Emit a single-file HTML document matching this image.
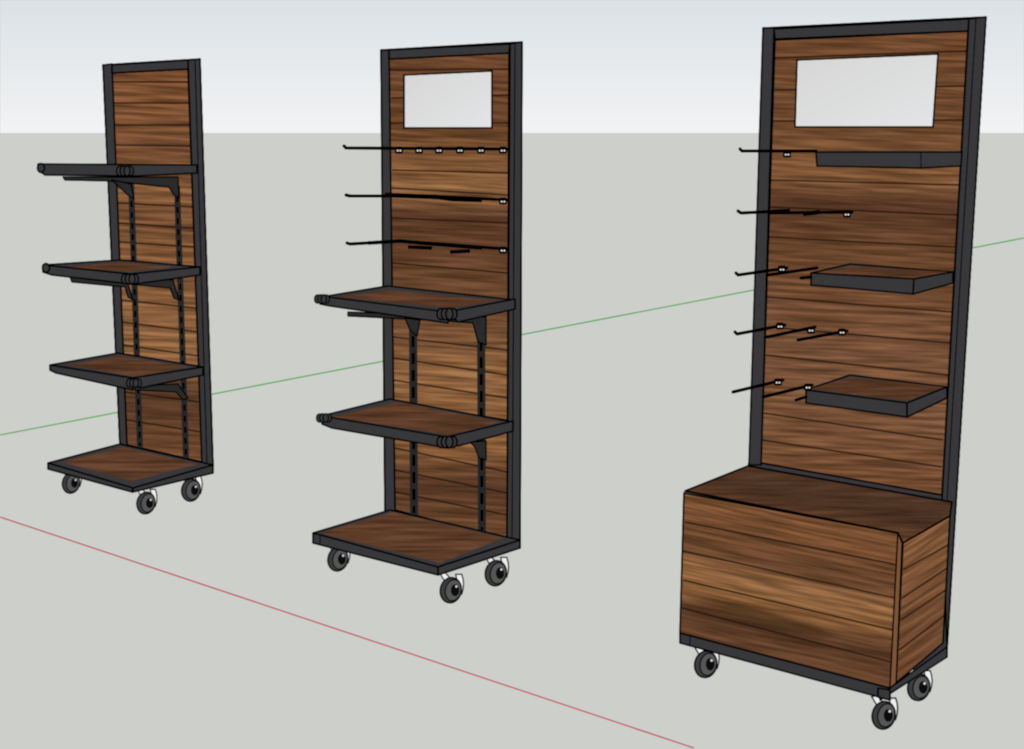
<!DOCTYPE html>
<html>
<head>
<meta charset="utf-8">
<title>Retail display units</title>
<style>
html,body{margin:0;padding:0;background:#cdcfca;width:1024px;height:749px;overflow:hidden}
svg{display:block;overflow:hidden}
.f{fill:#39393a;stroke:#060606;stroke-width:1.6;stroke-linejoin:round}
.d{fill:#2a2a2b;stroke:#060606;stroke-width:1.3;stroke-linejoin:round}
.o{fill:none;stroke:#060606;stroke-width:1.7;stroke-linejoin:round}
.p{fill:none;stroke:#24150c;stroke-width:1.5;opacity:.85}
.h{fill:none;stroke:#050505;stroke-width:3;stroke-linecap:round;stroke-linejoin:round}
.u{stroke:#262627;stroke-width:6;fill:none}
.s{stroke:#040404;stroke-width:2;fill:none;stroke-dasharray:6 5}
.t{stroke:#060606;stroke-width:1}
</style>
</head>
<body>
<svg width="1024" height="749" viewBox="0 0 1024 749" xmlns="http://www.w3.org/2000/svg">
<defs>
<linearGradient id="sky" x1="0" y1="0" x2="0" y2="1">
<stop offset="0" stop-color="#dbe1e5"/><stop offset="1" stop-color="#f2f3f4"/>
</linearGradient>
<linearGradient id="glass" x1="0" y1="0" x2="1" y2="1">
<stop offset="0" stop-color="#d6d6d6"/><stop offset="1" stop-color="#e3e4e5"/>
</linearGradient>
<linearGradient id="w1" gradientUnits="userSpaceOnUse" x1="0" y1="66" x2="0" y2="465">
<stop offset="0" stop-color="#915f3b"/><stop offset=".13" stop-color="#94633f"/><stop offset=".22" stop-color="#8a5c3d"/><stop offset=".3" stop-color="#a5734a"/>
<stop offset=".38" stop-color="#8a5d3c"/><stop offset=".5" stop-color="#a06f47"/><stop offset=".62" stop-color="#a8764d"/><stop offset=".72" stop-color="#a5764b"/><stop offset=".84" stop-color="#654430"/><stop offset="1" stop-color="#8a5c3a"/>
</linearGradient>
<linearGradient id="w2" gradientUnits="userSpaceOnUse" x1="0" y1="50" x2="0" y2="545">
<stop offset="0" stop-color="#82553a"/><stop offset=".16" stop-color="#7d5334"/><stop offset=".24" stop-color="#9b6c46"/><stop offset=".29" stop-color="#ab7c50"/><stop offset=".34" stop-color="#684430"/><stop offset=".45" stop-color="#7a5237"/><stop offset=".55" stop-color="#865c3e"/>
<stop offset=".65" stop-color="#aa794d"/><stop offset=".8" stop-color="#a47246"/><stop offset=".88" stop-color="#654330"/><stop offset="1" stop-color="#8c5f3b"/>
</linearGradient>
<linearGradient id="w3" gradientUnits="userSpaceOnUse" x1="0" y1="30" x2="0" y2="500">
<stop offset="0" stop-color="#835738"/><stop offset=".2" stop-color="#835839"/><stop offset=".32" stop-color="#9a6b45"/><stop offset=".37" stop-color="#664330"/><stop offset=".46" stop-color="#7a5236"/><stop offset=".56" stop-color="#865b3e"/>
<stop offset=".68" stop-color="#8b6044"/><stop offset=".82" stop-color="#906446"/><stop offset="1" stop-color="#835738"/>
</linearGradient>
<linearGradient id="w4" gradientUnits="userSpaceOnUse" x1="0" y1="505" x2="0" y2="675">
<stop offset="0" stop-color="#986842"/><stop offset=".2" stop-color="#8a5c3b"/><stop offset=".36" stop-color="#7a5237"/><stop offset=".5" stop-color="#ad7c50"/><stop offset=".62" stop-color="#a37247"/><stop offset=".75" stop-color="#644330"/><stop offset="1" stop-color="#8d5f3e"/>
</linearGradient>
<linearGradient id="w5" gradientUnits="userSpaceOnUse" x1="0" y1="535" x2="0" y2="660">
<stop offset="0" stop-color="#9a6b45"/><stop offset=".5" stop-color="#8c6040"/><stop offset="1" stop-color="#82573a"/>
</linearGradient>
<linearGradient id="w6" gradientUnits="userSpaceOnUse" x1="800" y1="478" x2="792" y2="518">
<stop offset="0" stop-color="#5a3e2e"/><stop offset=".5" stop-color="#533829"/><stop offset="1" stop-color="#6f4b33"/>
</linearGradient>
<filter id="wf" x="0" y="0" width="1" height="1" color-interpolation-filters="sRGB">
<feTurbulence type="fractalNoise" baseFrequency=".014 .28" numOctaves="3" seed="7" result="n"/>
<feColorMatrix in="n" type="matrix" values="0 0 0 0 .16  0 0 0 0 .09  0 0 0 0 .04  1 0 0 0 -.26" result="c"/>
<feComposite in="c" in2="SourceAlpha" operator="in" result="g"/>
<feMerge><feMergeNode in="SourceGraphic"/><feMergeNode in="g"/></feMerge>
</filter>
<filter id="soft" filterUnits="userSpaceOnUse" x="0" y="0" width="1024" height="749"><feGaussianBlur stdDeviation=".5"/></filter>
<filter id="bl" x="-30%" y="-60%" width="160%" height="220%"><feGaussianBlur stdDeviation="6"/></filter>
<clipPath id="c1"><polygon points="112,73 188,69 202,462 127,445"/></clipPath>
<clipPath id="c2"><polygon points="389,59 509,53 507,540 395,510"/></clipPath>
<clipPath id="c3"><polygon points="775,40 968,31 942,495 761,463"/></clipPath>
<clipPath id="c4"><polygon points="684,493 898,533 890,688 680,633"/></clipPath>
<clipPath id="c5"><polygon points="903,543 950,516 943,643 896,683"/></clipPath>
<g id="wheel">
<path d="M-10,-13 L-6,-14 L1,-6 L-4,-3 Z" fill="#efefef" stroke="#0a0a0a" stroke-width="1"/>
<path d="M3,-12 L8,-12 Q11,-4 8,4 L5,-3 Z" fill="#efefef" stroke="#0a0a0a" stroke-width="1"/>
<ellipse cx="-1" cy="1" rx="8.6" ry="10.4" transform="rotate(12 -1 1)" fill="#3e3e3f" stroke="#060606" stroke-width="1.2"/>
<ellipse cx="1" cy="1" rx="6.4" ry="8.8" transform="rotate(12 1 1)" fill="#565657" stroke="#0c0c0c" stroke-width="1"/>
<ellipse cx="2.5" cy="1" rx="3.4" ry="4.8" fill="#0a0a0a"/>
<circle cx="3.6" cy="-2" r="1" fill="#ddd"/>
</g>
<g id="knob">
<ellipse cx="-6" cy="0" rx="4" ry="5.6" class="f"/>
<ellipse cx="6" cy="0" rx="4" ry="5.6" class="f"/>
<ellipse cx="-2" cy="0" rx="3.6" ry="5.8" class="f"/>
<ellipse cx="2.4" cy="0" rx="3.6" ry="5.8" class="f"/>
</g>
<g id="peg">
<rect x="-4" y="-3.4" width="8" height="7" rx="2" fill="#060606"/>
<circle cx="-1.3" cy=".6" r=".95" fill="#f4f4f4"/><circle cx="1.4" cy=".6" r=".95" fill="#f4f4f4"/>
</g>
</defs>

<g filter="url(#soft)">
<!-- Sky and ground -->
<rect width="1024" height="134" fill="url(#sky)"/>
<rect y="133" width="1024" height="616" fill="#cdcfca"/>
<!-- Axes -->
<line x1="0" y1="435" x2="1024" y2="238" stroke="#42a048" stroke-width="1.1"/>
<line x1="0" y1="517" x2="694" y2="748" stroke="#b8383c" stroke-width="1.1"/>

<!-- ============ UNIT 1 ============ -->
<polygon class="f" points="103,65 200,59 213,466 202,466 127,446 120,446"/>
<g clip-path="url(#c1)">
<rect x="70" y="30" width="170" height="470" fill="url(#w1)" filter="url(#wf)" transform="rotate(2.5 155 260)"/>
<path class="p" d="M112,82 L188,82 M113,103 L189,103 M114,125 L190,125 M115,145 L191,146 M117,203 L193,207 M118,223 L193,228 M120,242 L195,247 M121,300 L197,308 M123,322 L198,332 M123,345 L199,356 M125,392 L200,402 M127,420 L201,432"/>
</g>
<polygon class="o" points="112,73 188,69 202,462 127,445"/>
<polygon class="f" points="103,65 112,64 127,446 120,446"/>
<polygon class="f" points="112,65 189,60 188,69 112,73"/>
<polygon class="f" points="188,60 200,59 213,466 202,466"/>
<line x1="195" y1="60" x2="207" y2="466" class="t"/>
<!-- uprights -->
<line class="u" x1="131" y1="180" x2="140" y2="448"/><line class="s" x1="131" y1="190" x2="140" y2="446"/>
<line class="u" x1="177" y1="186" x2="186" y2="458"/><line class="s" x1="177" y1="196" x2="186" y2="456"/>
<!-- shelf 1 -->
<polygon class="d" points="63,177 178,177 179,198 174,195 169,187 110,181 65,180"/>
<polygon class="d" points="112,180 131,184 134,199 129,196"/>
<polygon class="f" points="38,164 197,165 197,173 135,176 45,175 38,170"/>
<use href="#knob" transform="translate(125,171) scale(.85)"/>
<ellipse cx="41" cy="168" rx="3.5" ry="4.4" class="f"/>
<!-- shelf 2 -->
<polygon class="d" points="70,277 173,280 179,300 174,298 170,288 128,284 133,300 128,297 125,287 72,282"/>
<polygon class="f" points="43,265 120,260 200,267 130,274"/>
<polygon points="67,267 120,262 173,267 130,272" fill="#6a4632" filter="url(#wf)"/>
<polygon class="f" points="43,265 130,274 131,284 52,275 43,272"/>
<polygon class="f" points="130,274 200,267 200,275 135,284"/>
<use href="#knob" transform="translate(130,279) scale(.85)"/>
<ellipse cx="46" cy="268" rx="3.5" ry="4.4" class="f"/>
<!-- shelf 3 -->
<polygon class="d" points="135,386 178,384 188,398 183,400 176,392 135,390"/>
<polygon class="f" points="50,365 118,353 203,367 132,378"/>
<polygon points="68,365 120,356 188,367 137,377" fill="#6a4632" filter="url(#wf)"/>
<polygon class="f" points="50,365 132,378 133,390 56,373 50,370"/>
<polygon class="f" points="132,378 203,367 203,375 140,388"/>
<use href="#knob" transform="translate(134,383) scale(.75)"/>
<!-- base -->
<use href="#wheel" transform="translate(72,482) scale(1)"/>
<use href="#wheel" transform="translate(147,502) scale(1.05)"/>
<use href="#wheel" transform="translate(192,489) scale(1.08)"/>
<polygon class="f" points="48,463 120,444 213,465 133,488"/>
<polygon points="62,462 123,447 198,464 132,481" fill="#6f4a35" filter="url(#wf)"/>
<polygon class="f" points="48,463 133,488 132,492 48,469"/>
<polygon class="f" points="133,488 213,465 213,473 133,492"/>

<!-- ============ UNIT 2 ============ -->
<polygon class="f" points="381,50 522,42 520,548 507,550 395,511 385,511"/>
<g clip-path="url(#c2)">
<rect x="350" y="20" width="200" height="560" fill="url(#w2)" filter="url(#wf)" transform="rotate(3 450 300)"/>
<path class="p" d="M390,70 L509,69 M391,98 L509,95 M391,123 L509,123 M392,170 L508,173 M392,188 L508,195 M392,218 L508,223 M392,263 L508,273 M393,337 L507,350 M393,358 L507,375 M393,380 L507,398 M394,402 L507,420 M395,448 L507,472 M395,470 L507,493 M395,492 L507,515"/>
</g>
<polygon class="o" points="389,59 509,53 507,540 395,510"/>
<polygon fill="url(#glass)" stroke="#060606" stroke-width="1.6" points="404,75 492,71 492,128 404,128"/>
<polygon class="f" points="381,50 389,50 395,511 385,511"/>
<polygon class="f" points="389,50 510,44 509,53 389,59"/>
<polygon class="f" points="510,44 522,42 520,548 507,548"/>
<line x1="515" y1="43" x2="512" y2="545" class="t"/>
<!-- hooks -->
<path class="h" d="M344,146 L346,148 L507,149"/>
<use href="#peg" transform="translate(399,150)"/><use href="#peg" transform="translate(419,150)"/><use href="#peg" transform="translate(439,150)"/><use href="#peg" transform="translate(460,150)"/><use href="#peg" transform="translate(481,150)"/><use href="#peg" transform="translate(503,150)"/>
<path class="h" d="M346,195 L350,196 L430,196 L507,200"/>
<path d="M385,195 L436,197 L452,199 L482,200" stroke="#040404" stroke-width="4.4" fill="none"/>
<use href="#peg" transform="translate(503,201)"/>
<path class="h" d="M347,243 L350,244 L400,241 L507,249"/>
<path d="M368,243 L400,241 L420,243 L445,245 L482,248 M408,247 L432,248 M450,252 L470,251" stroke="#040404" stroke-width="3.6" fill="none"/>
<use href="#peg" transform="translate(503,250)"/>
<!-- uprights -->
<line x1="413" y1="316" x2="414" y2="515" stroke="#262627" stroke-width="8"/><line x1="413" y1="336" x2="414" y2="513" stroke="#040404" stroke-width="2.8" stroke-dasharray="11 6"/>
<line x1="481" y1="316" x2="482" y2="532" stroke="#262627" stroke-width="8"/><line x1="481" y1="340" x2="482" y2="530" stroke="#040404" stroke-width="2.8" stroke-dasharray="11 6"/>
<!-- shelf A -->
<polygon class="d" points="348,312 486,317 486,345 478,342 473,323 432,320 348,316"/>
<polygon class="d" points="405,318 420,320 417,336 410,330"/>
<polygon class="f" points="315,298 388,286 515,300 447,312"/>
<polygon points="338,297 390,290 498,301 449,308" fill="#6a4632" filter="url(#wf)"/>
<polygon class="f" points="320,296 447,312 448,323 330,306 320,304"/>
<polygon class="f" points="447,312 515,299 515,309 458,322"/>
<use href="#knob" transform="translate(447,314)"/>
<g transform="translate(322,299) scale(.75)"><use href="#knob"/></g>
<!-- shelf B -->
<polygon class="d" points="470,442 486,441 486,460 479,458 475,447"/>
<polygon class="f" points="317,417 390,399 513,422 447,437"/>
<polygon points="332,417 397,402 500,422 450,435" fill="#6a4632" filter="url(#wf)"/>
<polygon class="f" points="322,416 447,437 448,448 332,428 322,424"/>
<polygon class="f" points="447,437 513,421 513,431 458,446"/>
<use href="#knob" transform="translate(447,442)"/>
<g transform="translate(324,418) scale(.75)"><use href="#knob"/></g>
<!-- base -->
<use href="#wheel" transform="translate(339,558) scale(1.15)"/>
<use href="#wheel" transform="translate(452,589) scale(1.22)"/>
<use href="#wheel" transform="translate(497,572) scale(1.22)"/>
<polygon class="f" points="313,533 390,510 520,540 438,567"/>
<polygon points="320,533 393,512 503,538 440,563" fill="#6d4833" filter="url(#wf)"/>
<polygon class="f" points="313,533 438,567 438,575 313,543"/>
<polygon class="f" points="438,567 520,540 520,548 438,575"/>
<line x1="320" y1="535" x2="320" y2="545" class="t"/>

<!-- ============ UNIT 3 ============ -->
<polygon class="f" points="763,28 986,17 947,650 890,690 700,640 749,463 761,463"/>
<g clip-path="url(#c3)">
<rect x="720" y="0" width="290" height="530" fill="url(#w3)" filter="url(#wf)" transform="rotate(2.5 860 260)"/>
<path class="p" d="M775,58 L967,51 M775,90 L965,86 M773,121 L963,120 M771,180 L960,185 M770,207 L958,215 M769,237 L955,247 M767,297 L952,312 M768,327 L950,343 M765,355 L948,375 M763,413 L943,440 M762,440 L942,467"/>
</g>
<polygon class="o" points="775,40 968,31 942,495 761,463"/>
<polygon fill="url(#glass)" stroke="#060606" stroke-width="1.6" points="797,60 938,54 933,127 795,127"/>
<polygon class="f" points="763,28 774,28 761,465 749,465"/>
<polygon class="f" points="774,29 969,19 968,31 775,39"/>
<polygon class="f" points="969,19 986,17 947,648 942,500"/>
<line x1="976" y1="18" x2="947" y2="500" class="t"/>
<!-- shelves -->
<polygon class="f" points="816,152 962,152 961,166 921,168 817,166"/>
<line x1="921" y1="152" x2="921" y2="168" class="t"/>
<polygon class="f" points="811,273 850,264 953,272 914,279"/>
<polygon points="815,273 851,266 950,272 914,278" fill="#6b4733" filter="url(#wf)"/>
<polygon class="f" points="811,273 914,279 913,294 811,285"/>
<polygon class="f" points="914,279 953,272 953,283 913,294"/>
<polygon class="f" points="806,390 850,375 947,387 907,403"/>
<polygon points="810,389 851,377 944,387 907,401" fill="#64422f" filter="url(#wf)"/>
<polygon class="f" points="806,390 907,403 907,417 806,403"/>
<polygon class="f" points="907,403 947,387 947,398 907,417"/>
<!-- hooks -->
<path class="h" d="M740,149 L742,151 L816,151"/><use href="#peg" transform="translate(787,154)"/>
<path class="h" d="M738,211 L741,213 L782,211"/><path class="h" d="M770,213 L852,212"/><use href="#peg" transform="translate(847,214)"/>
<path d="M772,212 L790,211 M803,214 L820,212" stroke="#040404" stroke-width="4.4" fill="none"/>
<path class="h" d="M736,273 L738,275 L787,268"/><use href="#peg" transform="translate(782,269)"/>
<path class="h" d="M768,275 L817,268"/><path class="h" d="M801,278 L811,277"/>
<path class="h" d="M735,332 L737,334 L785,325"/><use href="#peg" transform="translate(780,326)"/>
<path class="h" d="M767,337 L815,327"/><use href="#peg" transform="translate(811,330)"/>
<path class="h" d="M798,340 L847,331"/><use href="#peg" transform="translate(842,332)"/>
<path class="h" d="M733,392 L783,380"/><use href="#peg" transform="translate(778,382)"/>
<path class="h" d="M763,397 L812,385"/><use href="#peg" transform="translate(808,387)"/>
<path class="h" d="M796,400 L806,397"/>
<!-- wheels -->
<use href="#wheel" transform="translate(707,663) scale(1.28)"/>
<use href="#wheel" transform="translate(885,714) scale(1.33)"/>
<use href="#wheel" transform="translate(920,686) scale(1.28)"/>
<!-- base frame -->
<polygon class="f" points="680,633 890,688 890,700 680,643"/>
<polygon class="f" points="890,688 947,647 947,657 880,700"/>
<polygon class="f" points="878,688 890,690 890,700 878,697"/>
<line x1="690" y1="636" x2="690" y2="646" class="t"/>
<!-- box -->
<g clip-path="url(#c4)">
<rect x="660" y="505" width="255" height="170" fill="url(#w4)" filter="url(#wf)" transform="rotate(12 790 590)"/>
<ellipse cx="760" cy="620" rx="70" ry="10" transform="rotate(14 760 620)" fill="#2c1a10" opacity=".4" filter="url(#bl)"/>
<path class="p" stroke-width="1.6" d="M685,522 L897,565 M683,551 L895,598 M683,580 L893,630 M682,608 L891,662"/>
</g>
<polygon class="o" points="684,493 898,533 890,688 680,633"/>
<g clip-path="url(#c5)">
<rect x="850" y="535" width="147" height="125" fill="url(#w5)" filter="url(#wf)" transform="rotate(-33 925 600)"/>
<path class="p" stroke-width="1.6" d="M903,570 L948,545 M902,598 L947,568 M901,620 L946,590 M899,650 L945,615"/>
</g>
<polygon class="o" points="903,543 950,516 943,643 896,683"/>
<polygon points="685,491 748,466 952,502 950,516 903,543 898,533" fill="url(#w6)" stroke="#060606" stroke-width="1.6" stroke-linejoin="round" filter="url(#wf)"/>
<polygon class="o" points="685,491 748,466 952,502 950,516 903,543 898,533"/>
<polygon points="898,533 902,543 896,683 890,688" fill="#7c5539" stroke="#060606" stroke-width="1.2"/>
<line x1="685" y1="491" x2="898" y2="533" stroke="#040404" stroke-width="2"/>
</g>
</svg>
</body>
</html>
